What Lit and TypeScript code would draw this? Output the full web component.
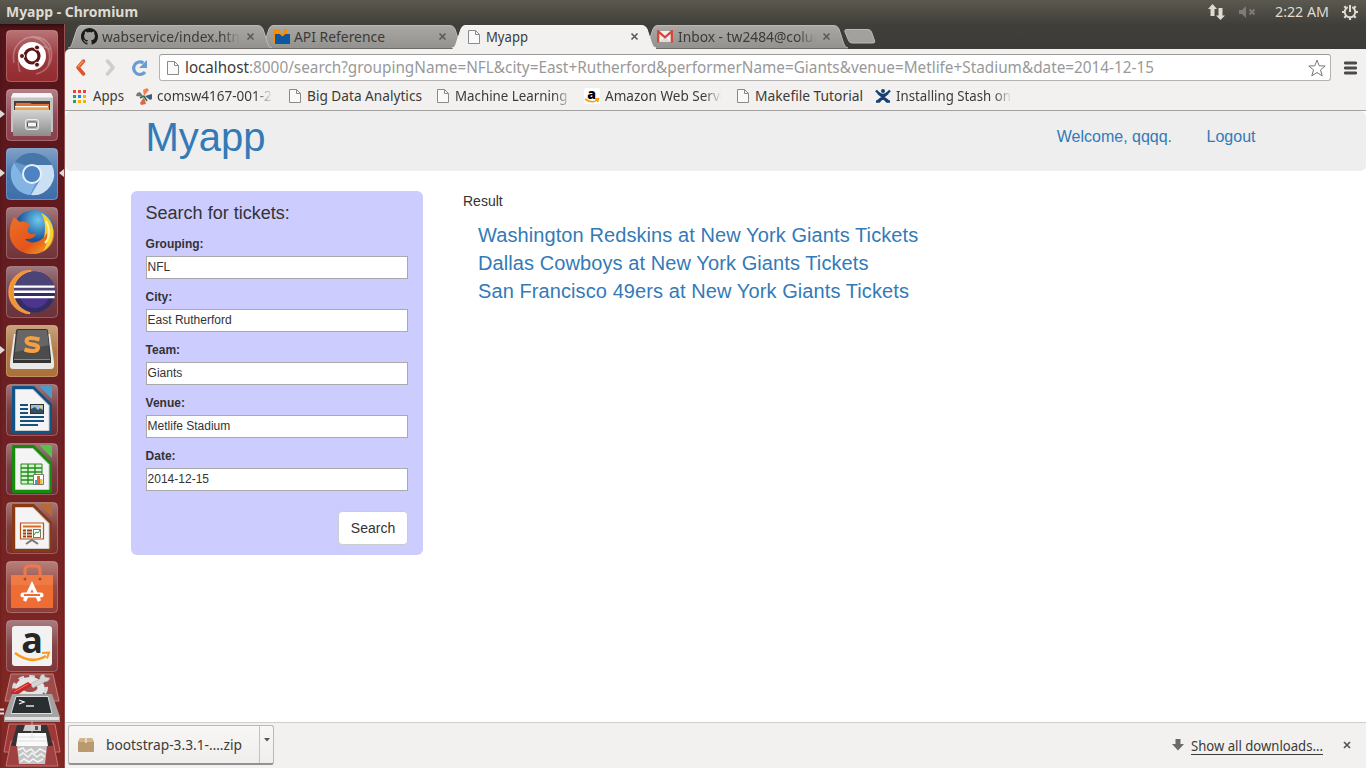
import { LitElement, html, svg, css } from "lit";
import { customElement } from "lit/decorators.js";

/** Single line of chrome text fitted to a known width. */
const line = (text: string, width: number, size: number, cls = "", clip = width) => html`
  <svg class="line ${cls}" width=${clip} height="22"><text x="0" y="16" font-size=${size} textLength=${width} lengthAdjust="spacingAndGlyphs">${text}</text></svg>`;

const page = html`<svg width="12" height="14" viewBox="0 0 12 14"><path d="M.5.5h7l4 4v9H.5z" fill="#fafafa" stroke="#8a8a8a"/><path d="M7.500.5v4h4" fill="none" stroke="#8a8a8a"/></svg>`;
const close = html`<svg class="close" width="9" height="9" viewBox="0 0 9 9"><path d="M1.500 1.500l6 6M7.500 1.500l-6 6" stroke="#5a5955" stroke-width="1.600"/></svg>`;

const github = html`<svg width="17" height="17" viewBox="0 0 16 16"><path fill="#1b1a19" d="M8 0C3.58 0 0 3.58 0 8c0 3.54 2.29 6.53 5.47 7.59.4.07.55-.17.55-.38v-1.49c-2.01.37-2.53-.49-2.69-.94-.09-.23-.48-.94-.82-1.13-.28-.15-.68-.52-.01-.53.63-.01 1.08.58 1.23.82.72 1.21 1.87.87 2.33.66.07-.52.28-.87.51-1.07-1.78-.2-3.64-.89-3.64-3.95 0-.87.31-1.59.82-2.15-.08-.2-.36-1.02.08-2.12 0 0 .67-.21 2.2.82a7.6 7.6 0 0 1 4 0c1.53-1.04 2.2-.82 2.2-.82.44 1.1.16 1.92.08 2.12.51.56.82 1.27.82 2.15 0 3.07-1.87 3.75-3.65 3.95.29.25.54.73.54 1.48v2.2c0 .21.15.46.55.38A8 8 0 0 0 16 8c0-4.42-3.58-8-8-8z"/></svg>`;
const api = html`<svg width="17" height="16" viewBox="0 0 17 16"><path d="M0 0h7v3l2 2 2-2V0h3v6H2v9H0z" fill="#fb8c00"/><path d="M2 5h4.500l3 2.500 3-2.500H17v10H2z" fill="#0b57a0"/></svg>`;
const gmail = html`<svg width="16" height="13" viewBox="0 0 16 13"><path d="M1 1h14v11H1z" fill="#f4f2f0"/><path d="M2 12l6-5 6 5z" fill="#ddd"/><path d="M1.200 12.500V1.300L8 7.300l6.800-6v11.200" fill="none" stroke="#d6453a" stroke-width="2.300"/></svg>`;

const tabShape = (active: boolean) => html`<svg class="shape" width="205" height="25" viewBox="0 0 205 25">
  <defs><linearGradient id="g" x2="0" y2="1"><stop stop-color="#a9a8a4"/><stop offset="1" stop-color="#93928e"/></linearGradient></defs>
  <path d="M0 24C3 24 3.500 21 4.500 18.500L9 5Q10.500 1.500 13 1.500H190Q193.500 1.500 195 5L199.500 19Q201 24 204 24" fill=${active ? "#f2f1f0" : "url(#g)"} stroke=${active ? "#f8f7f6" : "#bab9b5"} stroke-width="1"/>
  ${active ? svg`<path d="M1 24h203v1H1z" fill="#f2f1f0"/>` : svg`<path d="M1 24.500h203" stroke="#6d6c68"/>`}</svg>`;

const tile = (bg: string, body: unknown) => html`<svg class="tile" width="52" height="52" viewBox="0 0 52 52">
  <defs><linearGradient id="t" x2="0" y2="1"><stop stop-color="#fff" stop-opacity=".38"/><stop offset=".5" stop-color="#fff" stop-opacity=".12"/><stop offset="1" stop-color="#fff" stop-opacity=".05"/></linearGradient></defs>
  <rect width="52" height="52" rx="4" fill=${bg}/><rect x=".5" y=".5" width="51" height="51" rx="4" fill="url(#t)" stroke="#fff" stroke-opacity=".25"/>${body}</svg>`;

const doc = (c: string, fold: string, body: unknown) => svg`
  <path d="M7 2h21l18 18v28q0 2-2 2H8q-2 0-2-2V4q0-2 1-2z" fill=${c}/><path d="M33 2h11q2 0 2 2v11z" fill=${fold}/>
  <path d="M9.500 5.500h17.500L43 21.500V46.500H9.500z" fill="#f4f4f4" stroke="#ccc"/>${body}`;

const tiles = [
  tile("#8e2024", svg`<path d="M8 33C4 12 24 2 37 9s12 31-7 35M14 42C7 23 24 10 44 19M18 9c15-7 31 9 24 27" fill="none" stroke="#fff" stroke-opacity=".28" stroke-width="1.500"/>
    <circle cx="26" cy="26" r="14" fill="#fff"/><circle cx="26" cy="26" r="7" fill="none" stroke="#5d1518" stroke-width="3.200"/>
    <g fill="#5d1518" stroke="#fff" stroke-width="1"><circle cx="16" cy="26" r="2.500"/><circle cx="31" cy="17.500" r="2.500"/><circle cx="31" cy="34.700" r="2.500"/></g>`),
  tile("#843440", svg`<path d="M7 4h38l2 4v35H5V8z" fill="#c4c4c4"/><path d="M5 8.500l2-4.500h38l2 4.500z" fill="#f4f4f4"/><path d="M8 12h36v9H8z" fill="#493d37"/><path d="M10 14h14l2 1h17v7H9z" fill="#e57331"/><path d="M9 17h33v1.500H9z" fill="#fff"/><path d="M9 19h34v3H9z" fill="#efa450"/>
    <defs><linearGradient id="cab" x2="0" y2="1"><stop stop-color="#d4d4d4"/><stop offset="1" stop-color="#8c8c8c"/></linearGradient></defs><path d="M7 21h38v25q0 1-1 1H8q-1 0-1-1z" fill="url(#cab)"/><rect x="19.500" y="30.500" width="13" height="10" rx="2" fill="#bbb" stroke="#eee"/><rect x="21.500" y="33" width="9" height="5" rx="1" fill="#f5f5f5" stroke="#4d4d4d"/>`),
  tile("#3467a6", svg`<circle cx="26" cy="26" r="21" fill="#6598cb"/><path d="M26 5a21 21 0 0 1 20 12H18L9 14A21 21 0 0 1 26 5z" fill="#4777a8"/><path d="M8 15l10 15 12 4-6 13A21 21 0 0 1 8 15z" fill="#82b5e3"/><path d="M30 17h16a21 21 0 0 1-21 30l9-15z" fill="#cbe0f3"/><circle cx="26" cy="26" r="9" fill="#4d83c3" stroke="#e6f1fa" stroke-width="2"/>`),
  tile("#6a2930", svg`<defs><radialGradient id="glb" cx=".6" cy=".25"><stop stop-color="#70c9ee"/><stop offset="1" stop-color="#17549a"/></radialGradient><linearGradient id="fox" x2="1" y2="1"><stop stop-color="#ea7129"/><stop offset=".6" stop-color="#e45419"/><stop offset="1" stop-color="#f4b22e"/></linearGradient></defs>
    <circle cx="28" cy="23" r="20" fill="url(#glb)"/><path d="M8 10l6 5c4-1 7 0 10 2-1 3-3 5-2 8 2 2 5 3 8 1-1 6-7 6-11 6 4 5 12 4 17 0 5-4 7-11 5-16 3 4 6 4 7 7C50 40 36 48 25 47 10 46 2 34 4 23c0-6 3-10 4-13z" fill="url(#fox)"/><path d="M35 6c8 3 14 13 12 23-1 7-5 12-10 15 4-6 5-11 4-18l-3 5c2-10 1-19-3-25z" fill="#f9cd35"/><path d="M40 14c5 10 3 18-1 22" stroke="#fff39c" fill="none" stroke-width="2"/>`),
  tile("#622730", svg`<path d="M25 5A21.500 21.500 0 0 0 24 47A20 20 0 0 1 25 5z" fill="#f68d25" stroke="#ef9840" stroke-width="2.500"/><circle cx="28.500" cy="26" r="20.500" fill="#322d66"/><path d="M8 26a20.500 20.500 0 0 1 41 0z" fill="#4b4477"/><path d="M14 31h29a15 15 0 0 1-29 0z" fill="#4b358e"/><path d="M8 19.500h40.500v2.200H8zM8 24.500h41v2.500H8zM8 30h40.500v2.200H8z" fill="#fff"/>`),
  tile("#a6692e", svg`<path d="M4 37l4-28h36l4 28v4q0 3-3 3H7q-3 0-3-3z" fill="#e8e8e8"/><path d="M7 33l3-27q0-2 2-2h28q2 0 2 2l3 27v5H7z" fill="#343434"/><path d="M11 5h30l3 29H8z" fill="#4c4c4c"/><path d="M12 5h29l2 15L9 27z" fill="#747474" opacity=".65"/><path d="M8 34.500h36" stroke="#888"/><path d="M33.500 14.500Q20.500 11 20.500 16c0 5 12.500 2 11.500 7-1 4.500-9 3-13.500 1.500" fill="none" stroke="#f8a040" stroke-width="4"/>`),
  tile("#672429", doc("#0e5487", "#4d9bc9", svg`<path d="M14 21h8M14 25h8M14 29h8M14 33h24M14 37h24M14 41h18" stroke="#15527e" stroke-width="2"/><rect x="24.500" y="20.500" width="13" height="9" fill="#8bc5e9" stroke="#333"/><path d="M25 29v-4l4-2 3 3 2-2 3 2v3z" fill="#375060"/><circle cx="35" cy="23" r="1.500" fill="#f2cf40"/>`)),
  tile("#672429", doc("#158c0c", "#55c24a", svg`<path d="M15 21h21v20H15z" fill="#d6f4c7" stroke="#1f8a1f"/><path d="M15 25h21M15 29h21M15 33h21M15 37h21M22 21v20M29 21v20" stroke="#1f8a1f" stroke-width="1.300"/><path d="M27.500 31.500h10v10h-10z" fill="#fff" stroke="#777"/><path d="M29 37h2v4h-2z" fill="#3b9cd9"/><path d="M31 33h3v8h-3z" fill="#e36820"/><path d="M34 36h2.500v5H34z" fill="#eec12f"/>`)),
  tile("#702420", doc("#893913", "#b76a35", svg`<path d="M14.500 21h23v16h-23z" fill="#fff5e9" stroke="#bb501c" stroke-width="1.200"/><path d="M17 24.500h18" stroke="#d26e2a" stroke-width="2"/><path d="M17 28.500h3M21 28.500h5M17 31.500h3M21 31.500h5M17 34.500h3M21 34.500h5" stroke="#8d421b" stroke-width="2"/><rect x="27.500" y="27.500" width="7" height="8" fill="#fff" stroke="#777"/><path d="M28 33l2-3 2 1 2-3" stroke="#269a32" fill="none"/><path d="M20 42l6-4 6 4" stroke="#777" stroke-width="2" fill="none"/>`)),
  tile("#88332b", svg`<path d="M5 14h42v33H5z" fill="#ed6d35"/><path d="M5 14h42v10H5z" fill="#ef7a46"/><path d="M19 17V9q0-4 4-4h7q4 0 4 4v8" fill="none" stroke="#f1774c" stroke-width="3"/><circle cx="19" cy="18" r="1.500" fill="#a94b2a"/><circle cx="34" cy="18" r="1.500" fill="#a94b2a"/><path d="M18.500 40l7.500-16 7.500 16" stroke="#fff" stroke-width="3.500" fill="none"/><path d="M17 34h18" stroke="#fff" stroke-width="5" stroke-linecap="round"/><path d="M18 34h16" stroke="#ed6d35" stroke-width="2"/>`),
  tile("#752c2e", svg`<rect x="6" y="6" width="40" height="40" rx="3" fill="#f2f2f2"/><text x="26" y="33" text-anchor="middle" font-family="Open Sans" font-weight="700" font-size="36" fill="#262626">a</text><path d="M9 33q16 12 31 3" fill="none" stroke="#f79b1b" stroke-width="2.500"/><path d="M36 33l7-.500-2 6" fill="none" stroke="#f79b1b" stroke-width="2"/>`),
];

const stack = html`<svg class="stack" width="64" height="95" viewBox="0 0 64 95">
  <path d="M11 1h42l6 27H5z" fill="#a04a4a" stroke="#bd8585"/>
  <ellipse cx="30" cy="15" rx="16" ry="11" fill="none" stroke="#d9d9d9" stroke-width="4" stroke-dasharray="5.500 5"/><ellipse cx="30" cy="15" rx="11" ry="7.500" fill="none" stroke="#e4e4e4" stroke-width="7"/>
  <path d="M30 11L40 6q-1-4 4-5l1 3 5 1q-1 4-6 4L33 15z" fill="#d5d5d5" stroke="#999" stroke-width=".5"/><path d="M11 22q-1-3 3-5L28 9l4 3-15 10q-4 2-6 0z" fill="#cb2526"/><path d="M14 19l14-8" stroke="#f07a70"/>
  <path d="M12 21h40l8 23v5H4v-5z" fill="#a3a3a3"/><path d="M5 44h54v3H5z" fill="#e2e2e2"/><path d="M16 23.500h32l4 17H11z" fill="#292e30" stroke="#ddd"/><path d="M19 27l5 2-5 2" fill="none" stroke="#fff" stroke-width="1.300"/><path d="M26 33h8" stroke="#fff" stroke-width="1.300"/>
  <path d="M9 51h46l5 28H4z" fill="#a03737" stroke="#be7777"/><path d="M11 68h42l5 25H6z" fill="#a04040" stroke="#bd7777"/>
  <path d="M17 52h30l6 21H11z" fill="#333"/><path d="M25 52h16v6H23z" fill="#ccc"/><path d="M35 53h3v4h-3z" fill="#555"/><path d="M18 60h28l2 13H16z" fill="#fafafa"/><path d="M18 64h28M17 68h30" stroke="#ddd"/>
  <path d="M17 73h30l-2 18H19z" fill="#c4c4c4"/><path d="M18 77l5-2 3 4 5-3 4 4 5-4 6 3M19 83l4-3 5 4 4-4 5 4 4-3 4 3M20 89l4-3 5 3 4-3 5 3 5-3" fill="none" stroke="#f4f4f4" stroke-width="1.500"/>
  <path d="M32 48v18" stroke="#ddd" stroke-opacity=".7"/><path d="M0 36.500h4M0 40.500h4" stroke="#ddd" stroke-width="2"/></svg>`;

const amazon = html`<svg width="16" height="16" viewBox="0 0 16 16"><rect width="16" height="16" rx="2.500" fill="#fff"/><text x="7.500" y="10.500" text-anchor="middle" font-family="Open Sans" font-weight="800" font-size="14">a</text><path d="M1 11q7 5 12 1M11 11l3.500-.300-1 3.300" stroke="#f59a1c" stroke-width="1.600" fill="none"/></svg>`;
const pinwheel = html`<svg width="17" height="17" viewBox="0 0 17 17"><path d="M8 8L7 2l4-2 2 2z" fill="#ee8256"/><path d="M9 8l7-2v5l-2 1z" fill="#3d5f80"/><path d="M8 9l2 7-5 1-1-2z" fill="#e2634c"/><path d="M8 9L0 8l1-3 3-1z" fill="#777"/><path d="M8 8l3 5M8 8l-4 2" stroke="#3f6b55" stroke-width="1.500"/></svg>`;
const stash = html`<svg width="16" height="16" viewBox="0 0 16 16"><path d="M1 2.500q4 4.500 7 4.500t7-4.500M1 13.500h3q2-2 4-4 2 2 4 4h3M3 5l10 8M13 5L3 13" fill="none" stroke="#173f70" stroke-width="2.300"/><circle cx="8" cy="3" r="2" fill="#173f70"/></svg>`;
const grid = html`<svg width="13" height="13" viewBox="0 0 13 13">${["#ea4335", "#ea4335", "#ea4335", "#2ba24c", "#1a84f5", "#f5b400", "#2ba24c", "#f5b400", "#f5b400"].map((c, i) => svg`<rect x=${(i % 3) * 5} y=${Math.floor(i / 3) * 5} width="3" height="3" fill=${c}/>`)}</svg>`;

@customElement("app-root")
export class AppRoot extends LitElement {
  static styles = css`
    :host { display: flex; flex-direction: column; width: 1366px; height: 768px; overflow: hidden; background: #fff; font-family: "Liberation Sans", Arial, sans-serif; color: #333; }
    * { box-sizing: border-box; }
    svg { display: block; flex: none; }
    .line { font-family: "Noto Sans", "Open Sans", sans-serif; fill: #3c3b37; overflow: visible; }
    .line.fade { overflow: hidden; -webkit-mask-image: linear-gradient(90deg, #000 calc(100% - 18px), transparent); }
    .grey { fill: #999; }
    .light { fill: #dfdbd2; }
    .bold { font-weight: 700; }
    .panel { height: 24px; flex: none; display: flex; align-items: center; padding: 0 7px 0 6px; background: linear-gradient(#5b594f, #403f3a); }
    .panel .push { margin-left: auto; }
    .clock { margin: 0 12px 0 18px; }
    .volume { margin-left: 14px; }
    .desk { flex: 1; display: flex; min-height: 0; }
    .launcher { position: relative; width: 65px; flex: none; height: 744px; background: linear-gradient(#53151a, #691e22 40%, #852824); border-right: 1px solid #995051; padding: 6px 0 0 6px; box-shadow: inset 0 4px 4px -2px #2b0d0e; }
    .tile { margin-bottom: 7px; }
    .stack { margin: -6px 0 0 -6px; }
    .pips { position: absolute; left: 0; top: 0; }
    .window { flex: 1; display: flex; flex-direction: column; min-width: 0; background: #3c3b37; }
    .tabs { height: 25px; flex: none; display: flex; padding-left: 3px; background: linear-gradient(#413f3a, #3c3b37); }
    .tab { position: relative; width: 192px; flex: none; height: 25px; z-index: 1; display: flex; align-items: center; padding: 0 0 0 13px; }
    .tab > svg { position: relative; }
    .tab .shape { position: absolute; left: 0; top: 0; }
    .tab .icon { position: relative; width: 21px; }
    .tab .close { position: absolute; left: 178px; top: 8px; }
    .tab.t0 { z-index: 3; } .tab.t1 { z-index: 2; } .tab.t2 { z-index: 5; } .tab.t3 { z-index: 1; }
    .plus { margin: 5px 0 0 8px; }
    .toolbar { height: 62px; flex: none; background: #f2f1f0; border-bottom: 1px solid #a3a2a1; border-top-left-radius: 5px; }
    .nav { display: flex; align-items: center; height: 36px; padding: 1px 9px 0 10px; }
    .nav .fwd { margin-left: 19px; }
    .nav .reload { margin: 0 11px 0 15px; }
    .omni { width: 1172px; height: 27px; border: 1px solid #b4b3b1; border-top-color: #9b9a98; border-radius: 3px; background: #fff; display: flex; align-items: center; padding: 0 4px 0 7px; }
    .omni .doc { margin-right: 6px; }
    .omni .star { margin-left: auto; }
    .menu { margin-left: 13px; }
    .marks { display: flex; align-items: center; height: 22px; padding-left: 8px; }
    .mark { display: flex; align-items: center; }
    .mark .ico { display: flex; justify-content: flex-start; }
    .view { flex: 1; background: #fff; min-height: 0; }
    .head { height: 60px; background: #eee; border-radius: 6px; display: flex; padding: 4px 110.5px 0 80.500px; color: #337ab7; }
    .brand { font-size: 40px; line-height: 44px; flex: 1; }
    .head a { font-size: 16px; line-height: 22px; margin-top: 11px; }
    .head a + a { margin-left: 34.500px; }
    .body { display: flex; padding: 20px 0 0 66px; }
    .search { width: 292px; height: 364px; border-radius: 6px; background: #ccf; padding: 10px 15px 0 14.600px; display: flex; flex-direction: column; }
    h4 { margin: 0; font-size: 18px; font-weight: 400; line-height: 24px; }
    label { display: block; height: 53px; padding-top: 11px; font-size: 12px; line-height: 17px; font-weight: 700; }
    input { display: block; width: 262.400px; height: 23px; margin-top: 3px; border: 1px solid #a9a9a9; border-radius: 0; background: #fff; padding: 0 1px 2px; font: 12px "Liberation Sans", sans-serif; color: #333; outline: 0; }
    button { width: 70px; height: 34px; align-self: flex-end; margin-top: 21px; background: #fff; border: 1px solid #ccc; border-radius: 4px; color: #333; font: 14px "Liberation Sans", sans-serif; padding: 0; }
    .result { padding-left: 40px; font-size: 14px; line-height: 20px; }
    .links { padding: 10px 0 0 15px; color: #337ab7; font-size: 20px; line-height: 28px; letter-spacing: .09px; }
    .shelf { height: 46px; flex: none; background: #f2f1f0; border-top: 1px solid #cfcecd; display: flex; align-items: center; padding: 0 15px 1px 3px; }
    .item { width: 206px; height: 40px; display: flex; align-items: center; border: 1px solid #bbb9b6; border-bottom: 2px solid #92918f; border-radius: 3px; background: linear-gradient(#f8f7f6, #efeeed); padding-left: 9px; }
    .item .line { margin-left: 12px; }
    .drop { margin-left: auto; width: 14px; height: 37px; border-left: 1px solid #c4c2c0; padding: 12px 0 0 4px; }
    .down { margin-left: auto; }
    .all { margin: 0 20px 0 7px; border-bottom: 1px solid #3c3b37; height: 19px; display: flex; align-items: flex-end; }
    .all .line { margin-bottom: -3px; }
  `;

  private tab(i: number, icon: unknown, text: unknown) {
    return html`<div class="tab t${i}">${tabShape(i === 2)}<span class="icon">${icon}</span>${text}${close}</div>`;
  }

  private mark(icon: unknown, text: unknown, iconWidth: number, gap: number) {
    return html`<div class="mark" style="margin-right:${gap}px"><span class="ico" style="width:${iconWidth}px">${icon}</span>${text}</div>`;
  }

  render() {
    const fields = [["Grouping:", "NFL"], ["City:", "East Rutherford"], ["Team:", "Giants"], ["Venue:", "Metlife Stadium"], ["Date:", "2014-12-15"]];
    return html`
      <div class="panel">
        ${line("Myapp - Chromium", 132, 14, "light bold")}
        <svg class="push" width="18" height="18" viewBox="0 0 18 18" fill="#dfdbd2"><path d="M5.500 1L10 6H7.500v7h-4V6H1zM13.500 17L9 12.500h2.500V5h4v7.500H18z"/></svg>
        <svg class="volume" width="18" height="14" viewBox="0 0 18 14"><path d="M0 5h3l4-4v12L3 9H0z" fill="#7d7b75"/><path d="M10.500 4.500l5 5M15.500 4.500l-5 5" stroke="#7d7b75" stroke-width="2"/></svg>
        <span class="clock">${line("2:22 AM", 54, 14, "light")}</span>
        <svg width="18" height="18" viewBox="0 0 18 18" stroke="#dfdbd2" fill="none"><path d="M6.800 4.200a5.300 5.300 0 1 0 4.400 0" stroke-width="2"/><path d="M9 2v7" stroke-width="2"/><path d="M9 14v3M1 9h3M14 9h3M3.300 3.300l2 2M14.700 3.300l-2 2M3.300 14.700l2-2M14.700 14.700l-2-2" stroke-width="2.200"/></svg>
      </div>
      <div class="desk">
        <div class="launcher">
          ${tiles}${stack}
          <svg class="pips" width="65" height="744" fill="#ddd9d7"><path d="M0 86l5 4-5 4zM0 145l5 4-5 4zM0 322l5 4-5 4zM64 145l-5 4 5 4z"/></svg>
        </div>
        <div class="window">
          <div class="tabs">
            ${this.tab(0, github, line("wabservice/index.html", 146, 14.5, "fade", 138))}
            ${this.tab(1, api, line("API Reference", 91, 14.5))}
            ${this.tab(2, html`<svg width="15" height="14"><g transform="translate(3)"><path d="M.5.5h7l4 4v9H.5z" fill="#fafafa" stroke="#8a8a8a"/><path d="M7.500.5v4h4" fill="none" stroke="#8a8a8a"/></g></svg>`, line("Myapp", 42, 14.5))}
            ${this.tab(3, gmail, line("Inbox - tw2484@columbia", 168, 14.5, "fade", 138))}
            <svg class="plus" width="33" height="16" viewBox="0 0 33 16"><path d="M.800 2.500Q.5.500 2.500.500H24q2.500 0 3.500 2.500l3.200 9q.5 2-1.500 2H8q-2.500 0-3.500-2.500z" fill="#a2a19d" stroke="#bab9b5"/></svg>
          </div>
          <div class="toolbar">
            <div class="nav">
              <svg width="11" height="17" viewBox="0 0 11 17"><path d="M8.500 2L3 8.500 8.500 15" fill="none" stroke="#d9582b" stroke-width="3.500" stroke-linecap="round" stroke-linejoin="round"/><path d="M8.200 2L3 8" stroke="#f0905f" stroke-width="1.500"/></svg>
              <svg class="fwd" width="11" height="17" viewBox="0 0 11 17"><path d="M2.500 2L8 8.500 2.500 15" fill="none" stroke="#cfcecc" stroke-width="3.500" stroke-linecap="round" stroke-linejoin="round"/></svg>
              <svg class="reload" width="17" height="18" viewBox="0 0 17 18"><path d="M14 13A6.300 6.300 0 1 1 12.500 4" fill="none" stroke="#689dd3" stroke-width="3.200"/><path d="M16 1v8H8z" fill="#689dd3"/></svg>
              <div class="omni"><span class="doc">${page}</span>${line("localhost", 64, 16)}${line(":8000/search?groupingName=NFL&city=East+Rutherford&performerName=Giants&venue=Metlife+Stadium&date=2014-12-15", 905, 16, "grey")}
                <svg class="star" width="18" height="18" viewBox="0 0 18 18"><path d="M9 1l2.200 5.800 6 .2-4.700 3.900 1.700 6L9 13.500 3.800 16.900l1.700-6L.8 7l6-.2z" fill="#fff" stroke="#777"/></svg>
              </div>
              <svg class="menu" width="13" height="14"><path d="M1.300 2h10.400M1.300 7h10.400M1.300 12h10.400" stroke="#4a4a49" stroke-width="2.800" stroke-linecap="round"/></svg>
            </div>
            <div class="marks">
              ${this.mark(grid, line("Apps", 31, 14), 20, 12)}
              ${this.mark(pinwheel, line("comsw4167-001-2014", 138, 14, "fade", 116), 21, 16)}
              ${this.mark(page, line("Big Data Analytics", 115, 14), 18, 15)}
              ${this.mark(page, line("Machine Learning - C", 132, 14, "fade", 117), 18, 12)}
              ${this.mark(amazon, line("Amazon Web Services", 139, 14, "fade", 117), 21, 15)}
              ${this.mark(page, line("Makefile Tutorial", 108, 14), 18, 12)}
              ${this.mark(stash, line("Installing Stash on U", 128, 14, "fade", 116), 21, 0)}
            </div>
          </div>
          <div class="view">
            <div class="head"><span class="brand">Myapp</span><a>Welcome, qqqq.</a><a>Logout</a></div>
            <div class="body">
              <form class="search"><h4>Search for tickets:</h4>
                ${fields.map(([l, v]) => html`<label>${l}<input .value=${v} /></label>`)}
                <button type="button">Search</button>
              </form>
              <div class="result">Result
                <div class="links"><div>Washington Redskins at New York Giants Tickets</div><div>Dallas Cowboys at New York Giants Tickets</div><div>San Francisco 49ers at New York Giants Tickets</div></div>
              </div>
            </div>
          </div>
          <div class="shelf">
            <div class="item"><svg width="16" height="14" viewBox="0 0 16 14"><path d="M2 0h12l2 4v9q0 1-1 1H1q-1 0-1-1V4z" fill="#b9996d"/><path d="M2 0h12l2 4H0z" fill="#cfb68d"/><path d="M7 0h2v5H7z" fill="#ead9b8"/></svg>${line("bootstrap-3.3.1-….zip", 136, 14.5)}<div class="drop"><svg width="6" height="4"><path d="M0 0h6L3 3.500z" fill="#555"/></svg></div></div>
            <svg class="down" width="12" height="12" viewBox="0 0 12 12"><path d="M3.500 0h5v5H12L6 11.500 0 5h3.500z" fill="#6b6a68"/></svg>
            <span class="all">${line("Show all downloads...", 132, 14.5)}</span>
            <svg width="8" height="8" viewBox="0 0 8 8"><path d="M1 1l6 6M7 1L1 7" stroke="#555" stroke-width="1.700"/></svg>
          </div>
        </div>
      </div>`;
  }
}
